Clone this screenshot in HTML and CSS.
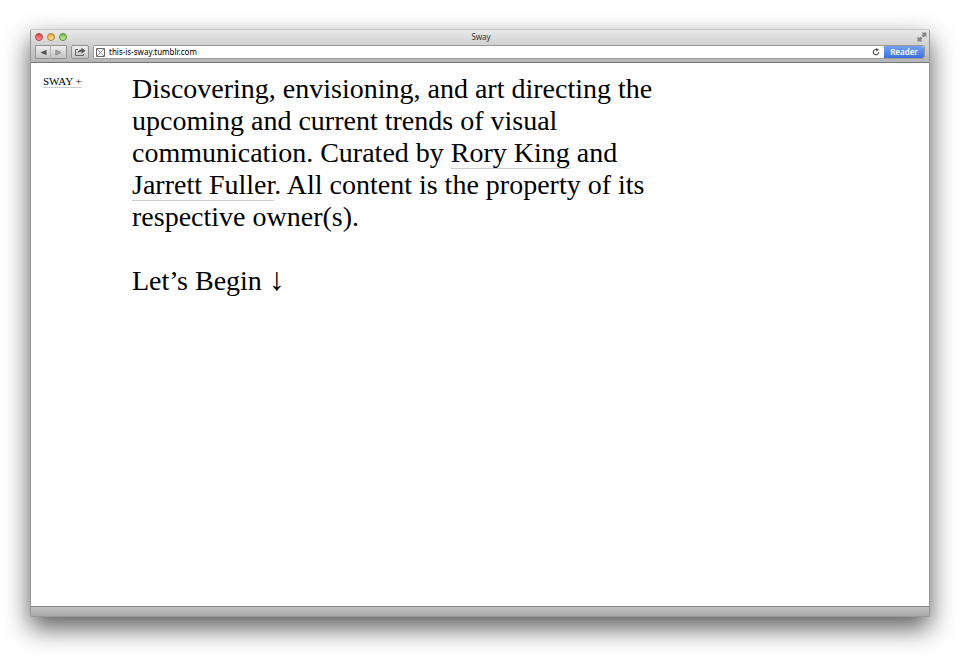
FILE: index.html
```html
<!DOCTYPE html>
<html lang="en">
<head>
<meta charset="utf-8">
<title>Sway</title>
<link rel="stylesheet" href="styles.css">
</head>
<body>
<div class="window">
  <header class="chrome">
    <div class="titlebar">
      <div class="lights">
        <button class="light red" aria-label="Close"></button>
        <button class="light yellow" aria-label="Minimize"></button>
        <button class="light green" aria-label="Zoom"></button>
      </div>
      <span class="title">Sway</span>
      <button class="expand" aria-label="Full screen">
        <svg width="10" height="10" viewBox="0 0 10 10" fill="#858585"><path d="M4.500.5h5v5L8 4 6.500 5.500 4.500 3.500 6 2ZM.5 4.500 2 6l1.500-1.500 2 2L4 8l1.500 1.500h-5Z"/></svg>
      </button>
    </div>
    <div class="toolbar">
      <div class="group">
        <button class="tool" aria-label="Back"><svg width="7" height="7" viewBox="0 0 7 7"><path d="M.5 3.500 6.500.8v5.400Z" fill="#555"/></svg></button>
        <button class="tool" aria-label="Forward"><svg width="7" height="7" viewBox="0 0 7 7"><path d="M6 3.500.8 1v5Z" fill="#aaa" stroke="#777" stroke-width=".7"/></svg></button>
      </div>
      <button class="tool share" aria-label="Share"><svg width="12" height="10" viewBox="0 0 12 10"><path d="M4 2.500H1.500v6h8V7" fill="none" stroke="#666"/><path d="M3.500 6.500C4 3.500 5.500 2.500 7.500 2.500V.8l4 2.900-4 2.800V4.800C5.500 4.800 4.500 5.200 3.500 6.500Z" fill="#555"/></svg></button>
      <div class="address">
        <svg width="9" height="9" viewBox="0 0 9 9" fill="none" stroke="#666"><path d="M.5.5h8v8h-8Z"/><path d="M1 1l7 7M8 1 1 8" stroke-width=".7"/></svg>
        <input class="url" type="text" aria-label="Address" value="this-is-sway.tumblr.com">
        <button class="reload" aria-label="Reload"><svg width="8" height="8" viewBox="0 0 8 8"><path d="M5.500 1.800A2.700 2.700 0 1 0 6.700 4.300" fill="none" stroke="#555" stroke-width="1.200"/><path d="M4.200 0 7.200 1.800 4.200 3.500Z" fill="#555"/></svg></button>
        <button class="reader">Reader</button>
      </div>
    </div>
  </header>
  <main class="page">
    <nav class="side"><a href="#sway">SWAY +</a></nav>
    <div class="intro">
      <p>Discovering, envisioning, and art directing the upcoming and current trends of visual communication. Curated by <a href="#rory">Rory King</a> and <a href="#jarrett">Jarrett Fuller</a>. All content is the property of its respective owner(s).</p>
      <p>Let’s Begin <span class="arrow">↓</span></p>
    </div>
  </main>
  <footer class="status"></footer>
</div>
</body>
</html>
```
FILE: styles.css
```css
* { box-sizing: border-box; }
body {
  margin: 0;
  min-height: 100vh;
  padding: 29px 30px 40px;
  display: flex;
  background: #fff;
  font-family: "Noto Sans", "Open Sans", sans-serif;
}
button {
  margin: 0;
  padding: 0;
  border: 0;
  background: none;
  font: inherit;
  display: flex;
  align-items: center;
  justify-content: center;
}
.window {
  flex: 1;
  min-width: 0;
  display: flex;
  flex-direction: column;
  background: #fff;
  border: 1px solid #999;
  border-top-color: #c4c4c4;
  border-radius: 3px 3px 2px 2px;
  box-shadow: 0 11px 26px rgba(0, 0, 0, 0.65);
}
.chrome {
  background: linear-gradient(#e9e9e9, #b5b5b5);
  border-bottom: 1px solid #777;
  border-radius: 3px 3px 0 0;
}
.titlebar {
  height: 15px;
  padding: 0 2px 1px 4px;
  display: grid;
  grid-template-columns: 1fr auto 1fr;
  align-items: center;
}
.lights { display: flex; gap: 4px; }
.light {
  width: 8px;
  height: 8px;
  border-radius: 50%;
  border: 1px solid #a33;
}
.red { background: linear-gradient(#e33f3f, #ff9a94); border-color: #a94442; }
.yellow { background: linear-gradient(#eea62c, #ffe68c); border-color: #a9803c; }
.green { background: linear-gradient(#77b84c, #c9f29a); border-color: #5d8a44; }
.title { font-size: 8px; line-height: 12px; color: #333; }
.expand { justify-self: end; }
.toolbar {
  height: 17px;
  padding: 0 4px 3px;
  display: flex;
  gap: 4px;
}
.group { display: flex; }
.tool {
  width: 16px;
  height: 14px;
  border: 1px solid #929292;
  border-radius: 2px;
  background: linear-gradient(#efefef, #c4c4c4);
}
.group .tool:first-child { border-right-color: #b0b0b0; border-radius: 2px 0 0 2px; }
.group .tool:last-child { border-left: 0; border-radius: 0 2px 2px 0; }
.share { width: 18px; }
.address {
  flex: 1;
  height: 14px;
  padding-left: 2px;
  display: flex;
  align-items: center;
  gap: 4px;
  background: #fff;
  border: 1px solid #999;
  border-radius: 2px;
}
.url {
  flex: 1;
  min-width: 0;
  height: 12px;
  padding: 0;
  border: 0;
  outline: 0;
  background: none;
  font: 8px/12px "Noto Sans", sans-serif;
  color: #000;
}
.reader {
  width: 40px;
  height: 12px;
  background: linear-gradient(#72a2f3, #3c70df);
  border-radius: 0 2px 2px 0;
  color: #fff;
  font-size: 8px;
  font-weight: 600;
  line-height: 12px;
}
.page {
  flex: 1;
  padding: 10px 12px;
  display: flex;
  font-family: "Liberation Serif", serif;
  color: #000;
}
.page a {
  color: inherit;
  text-decoration: none;
  border-bottom: 1px solid #ccc;
}
.side {
  width: 89px;
  padding-top: 2px;
  flex: none;
  font-size: 11px;
  line-height: 12px;
}
.intro {
  max-width: 530px;
  font-size: 28px;
  line-height: 32px;
}
.intro p { margin: 0 0 32px; }
.arrow { font-size: 32px; line-height: 24px; }
.status {
  height: 10px;
  background: linear-gradient(#c0c0c0, #aaa);
  border-top: 1px solid #888;
}
```
